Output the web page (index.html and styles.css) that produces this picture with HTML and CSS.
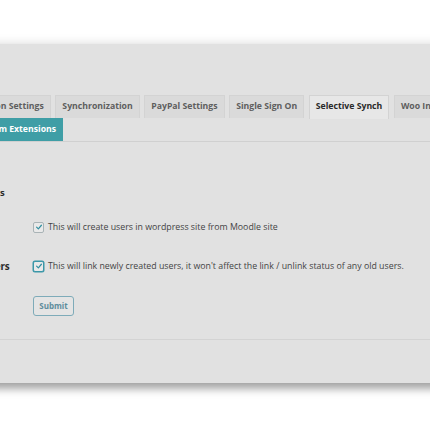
FILE: index.html
```html
<!DOCTYPE html>
<html>
<head>
<meta charset="utf-8">
<link rel="stylesheet" href="styles.css">
</head>
<body>
<div class="page">
  <div class="panel">
    <nav class="tabs">
      <a class="tab">Connection Settings</a>
      <a class="tab">Synchronization</a>
      <a class="tab">PayPal Settings</a>
      <a class="tab">Single Sign On</a>
      <a class="tab active">Selective Synch</a>
      <a class="tab">Woo Integration</a>
      <a class="tab teal">Premium Extensions</a>
    </nav>
    <div class="form">
      <h2 class="heading">Synchronize Users</h2>
      <div class="row row1">
        <div class="label">Create Users</div>
        <div class="field">
          <span class="check"><svg viewBox="0 0 10 10" width="8" height="8"><path d="M2 5.2 L4.2 7.3 L8 2.8" fill="none" stroke="#2f8ea0" stroke-width="1.5" stroke-linecap="round" stroke-linejoin="round"/></svg></span>
          <span class="desc">This will create users in wordpress site from Moodle site</span>
        </div>
      </div>
      <div class="row row2">
        <div class="label">Link Existing Users</div>
        <div class="field">
          <span class="check focus"><svg viewBox="0 0 10 10" width="8" height="8"><path d="M2 5.2 L4.2 7.3 L8 2.8" fill="none" stroke="#2f8ea0" stroke-width="1.5" stroke-linecap="round" stroke-linejoin="round"/></svg></span>
          <span class="desc">This will link newly created users, it won't affect the link / unlink status of any old users.</span>
        </div>
      </div>
      <div class="actions">
        <button class="submit">Submit</button>
      </div>
    </div>
    <div class="footer-line"></div>
  </div>
</div>
</body>
</html>
```
FILE: styles.css
```css
html, body {
  margin: 0;
  padding: 0;
  background: #ffffff;
  overflow: hidden;
  width: 430px;
  height: 430px;
}
.page {
  padding-top: 44px;
  font-family: "Open Sans", "Noto Sans", sans-serif;
}
.panel {
  margin-left: -100px;
  width: 760px;
  height: 339px;
  background: #e1e1e1;
  box-shadow: 0 6px 8px rgba(0,0,0,0.35), 0 -3px 8px rgba(0,0,0,0.08);
  display: flex;
  flex-direction: column;
}
.tabs {
  margin-top: 51px;
  padding-left: 50px;
  display: flex;
  flex-wrap: wrap;
  column-gap: 4.6px;
  width: 600px;
  border-bottom: 1px solid #d0d0d0;
}
.tab {
  box-sizing: border-box;
  height: 23px;
  line-height: 21px;
  padding: 0 6px;
  font-size: 8.7px;
  font-weight: 700;
  color: #5e5e5e;
  background: #dadada;
  border: 1px solid #d3d3d3;
  border-bottom: none;
}
.tab.active {
  background: #e7e7e7;
  color: #2a2a2a;
  height: 24px;
  margin-bottom: -1px;
}
.tab.teal {
  background: #3f9ea6;
  border-color: #3f9ea6;
  color: #ffffff;
  padding-left: 16px;
}
.form {
  padding-left: 18px;
}
.heading {
  margin: 44px 0 0 0;
  font-size: 9.5px;
  font-weight: 700;
  color: #2a2a2a;
  line-height: 14px;
}
.row {
  display: flex;
  align-items: center;
  height: 14px;
}
.row1 { margin-top: 20px; }
.row2 { margin-top: 25px; }
.label {
  flex: 0 0 115px;
  font-size: 9.8px;
  font-weight: 700;
  color: #2a2a2a;
  white-space: nowrap;
}
.field {
  display: flex;
  align-items: center;
  gap: 4px;
}
.check {
  box-sizing: border-box;
  width: 11px;
  height: 11px;
  border: 1px solid #a9b3b6;
  border-radius: 2px;
  background: #e9e9e9;
  display: flex;
  align-items: center;
  justify-content: center;
}
.check.focus {
  border-color: #3a97a8;
  box-shadow: 0 0 0 0.5px #3a97a8;
}
.desc {
  font-size: 8.8px;
  color: #444;
  white-space: nowrap;
}
.actions {
  margin-top: 19px;
  padding-left: 115px;
}
.submit {
  box-sizing: border-box;
  width: 41px;
  height: 20px;
  padding: 0;
  border: 1px solid #7eabb9;
  border-radius: 3px;
  background: #e4e4e4;
  color: #5e8c9c;
  font-family: "Open Sans", "Noto Sans", sans-serif;
  font-size: 8px;
  font-weight: 700;
}
.footer-line {
  margin-top: 23px;
  border-top: 1px solid #d3d3d3;
}
```
